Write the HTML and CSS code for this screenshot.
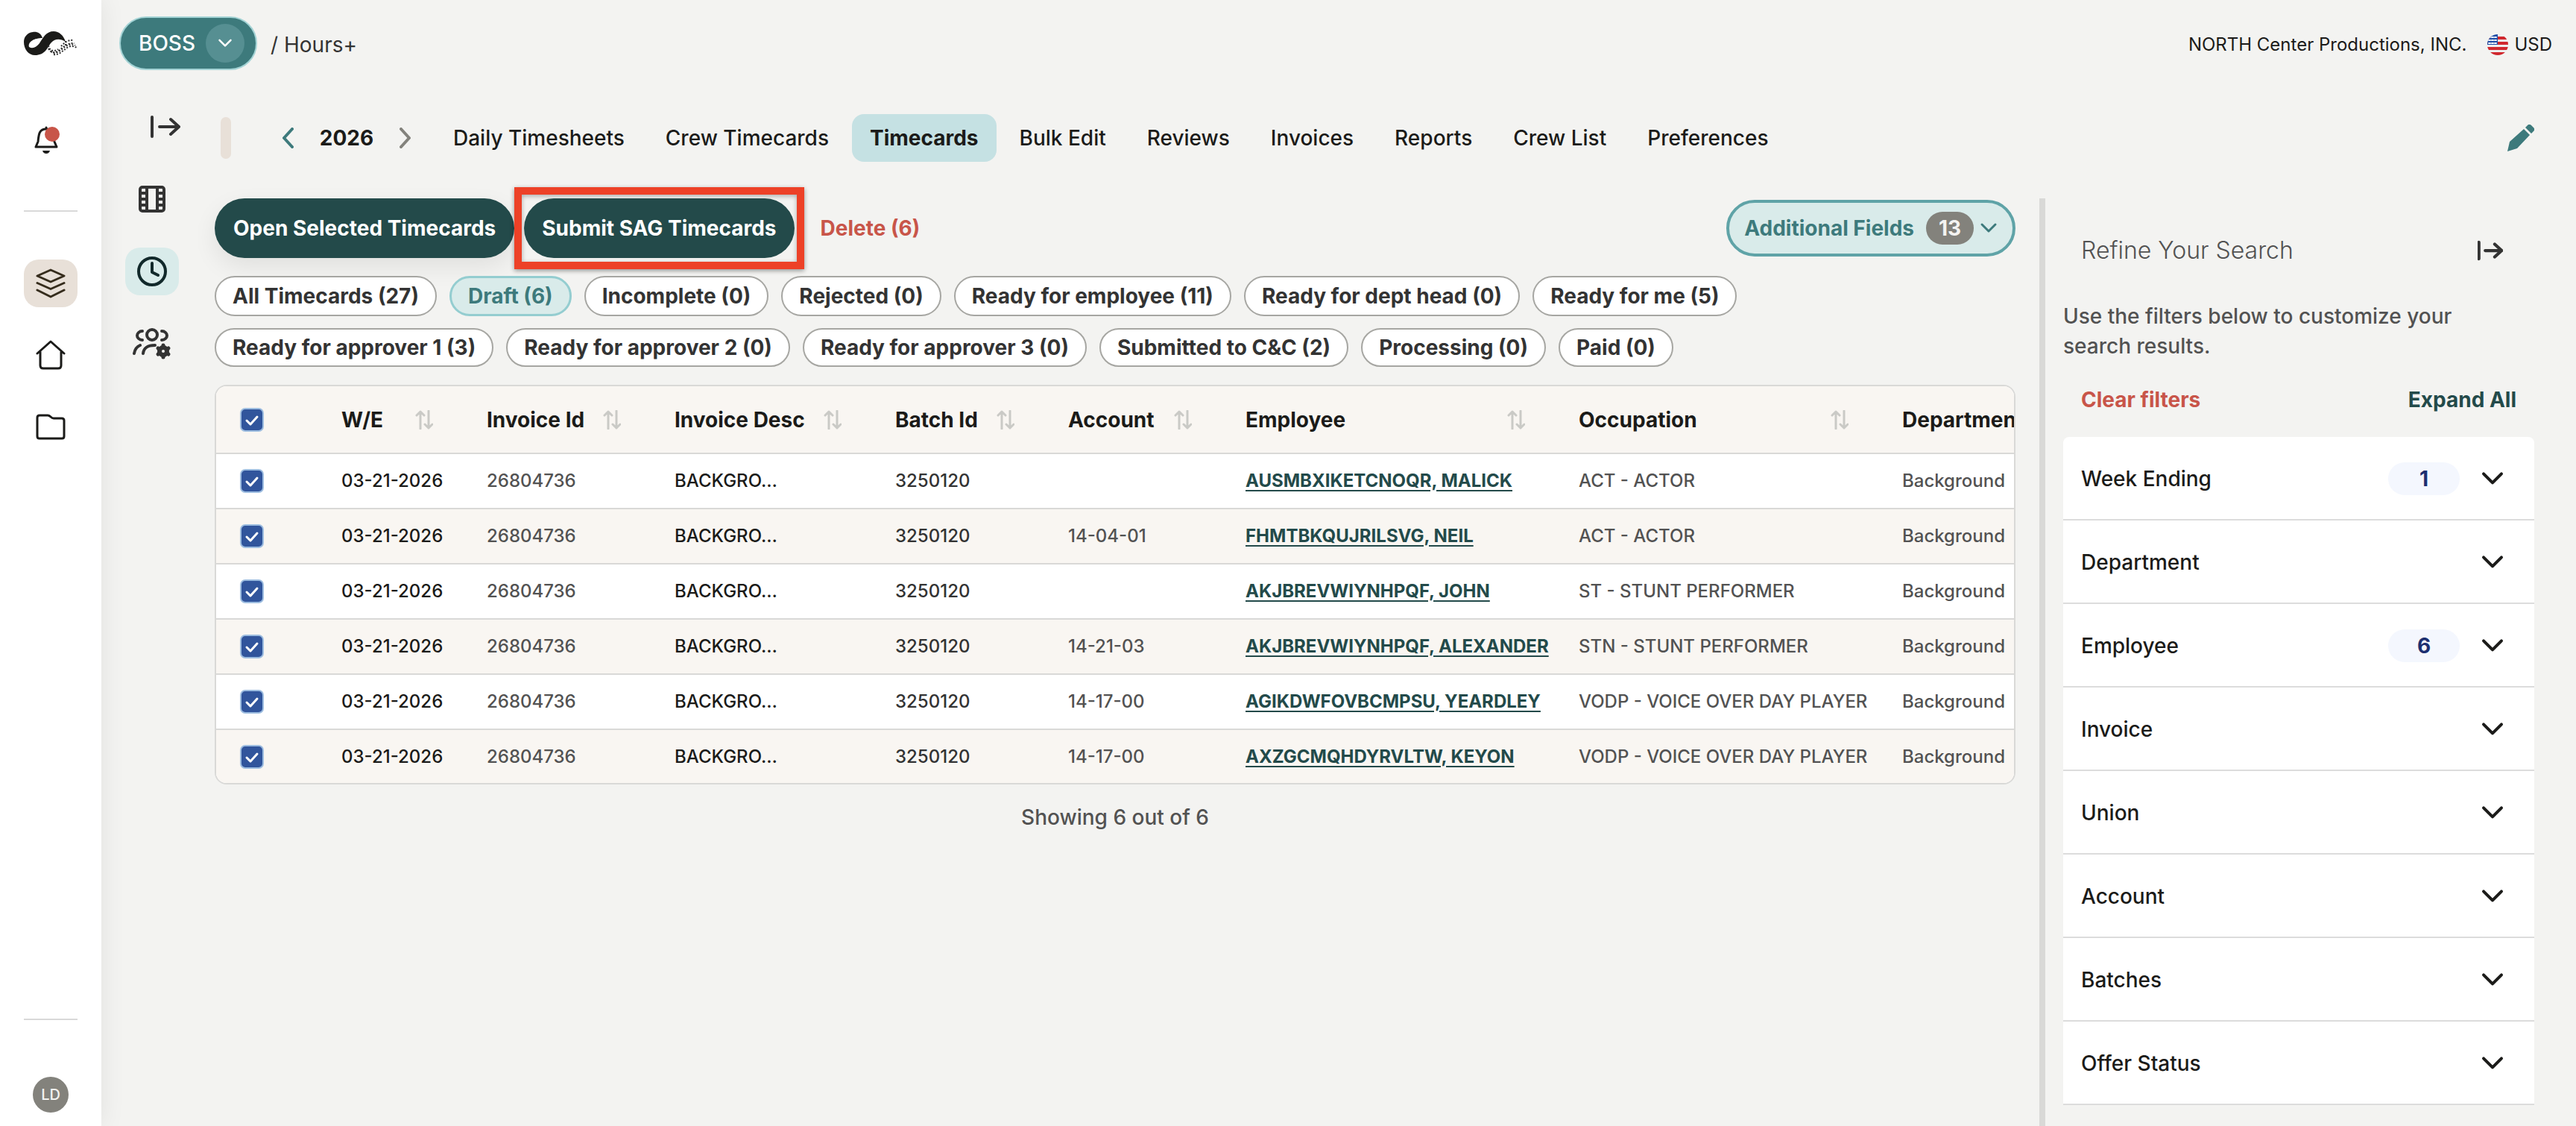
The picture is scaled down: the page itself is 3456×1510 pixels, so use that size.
FILE: index.html
```html
<!DOCTYPE html>
<html lang="en">
<head>
<meta charset="utf-8">
<title>Hours+ Timecards</title>
<link rel="stylesheet" href="styles.css">
</head>
<body>
<svg class="defs" aria-hidden="true">
  <symbol id="down" viewBox="0 0 24 24"><path d="M3 7l9 9 9-9"/></symbol>
  <symbol id="collapse" viewBox="0 0 40 32"><path d="M2 3v26M12 16h26M27 6l11 10-11 10"/></symbol>
  <symbol id="sort" viewBox="0 0 24 26"><path d="M7 25V2M2 7l5-5 5 5M18 1v23M13 19l5 5 5-5"/></symbol>
</svg>
<div class="app">
  <aside class="rail">
    <a class="logo" href="#" aria-label="Home page">
      <svg width="72" height="34" viewBox="0 0 72 34"><path class="band" d="M25 10C23 3 17 1 12 2 4 3 0 9 0 15c0 10 6 18 15 18 13 0 16-9 21-16 5-6 12-7 20-2C53 6 47 1 40 1 30 1 26 9 21 17c-4 5-9 8-14 5-2-7 7-12 18-12z"/><path class="dots" d="M33 20c1 7 7 9 13 5M33 24c3 6 9 7 15 2 6-5 12-10 20-9M36 28c5 4 10 1 15-3 6-5 11-9 18-5M40 32c6 1 10-3 14-6s9-8 17-3M50 21c4-4 8-9 17-8M56 14v6"/></svg>
    </a>
    <button class="rail-btn bell" aria-label="Notifications">
      <svg width="44" height="40" viewBox="0 0 44 40"><path d="M16 3v2M2 29h28l-3-7c-1-8-1-17-11-17S6 13 5 22z"/><path class="fill" d="M11 34h10c-1 3-3 4-5 4s-4-1-5-4z"/><circle class="alert" cx="24" cy="12" r="10"/></svg>
    </button>
    <hr class="rail-line">
    <nav class="rail-nav" aria-label="Main">
      <a class="rail-btn active" href="#" aria-label="Projects"><svg width="40" height="40" viewBox="0 0 40 40"><path d="M20 2l18 8-18 8L2 10zM2 19.500l18 8 18-8M2 29l18 9 18-9"/></svg></a>
      <a class="rail-btn" href="#" aria-label="Home"><svg width="40" height="40" viewBox="0 0 40 40"><path d="M2 18L20 2l18 16M6 16v18c0 2 1 4 4 4h20c3 0 4-2 4-4V16"/></svg></a>
      <a class="rail-btn" href="#" aria-label="Files"><svg width="40" height="40" viewBox="0 0 40 40"><path d="M2 8c0-2 1-3 3-3h11c4 0 4 4 8 4h11c2 0 3 1 3 3v21c0 2-1 3-3 3H5c-2 0-3-1-3-3z"/></svg></a>
    </nav>
    <div class="rail-foot"><hr class="rail-line"><button class="avatar">LD</button></div>
  </aside>

  <div class="main">
    <header class="topbar">
      <button class="boss">BOSS <span class="boss-chev"><svg width="20" height="20"><use href="#down"/></svg></span></button>
      <span class="crumb">/ Hours+</span>
      <span class="company">NORTH Center Productions, INC.</span>
      <span class="currency">
        <svg width="28" height="28" viewBox="0 0 28 28"><clipPath id="c"><circle cx="14" cy="14" r="14"/></clipPath><g clip-path="url(#c)"><path fill="#eee" d="M0 0h28v28H0z"/><path fill="#d0282e" d="M0 3h28v4H0zM0 10h28v4H0zM0 17h28v4H0zM0 24h28v4H0z"/><path fill="#1f4fa8" d="M0 0h14v14H0z"/><path stroke="#fff" stroke-width="2" stroke-dasharray="2 2" d="M2 4h12M2 8h12M2 12h12"/></g></svg>
        USD
      </span>
    </header>

    <div class="body">
      <nav class="tools" aria-label="Section">
        <button class="tool expand" aria-label="Expand menu"><svg width="40" height="32"><use href="#collapse"/></svg></button>
        <a class="tool" href="#" aria-label="Projects"><svg width="36" height="36" viewBox="0 0 36 36"><rect x="2" y="2" width="32" height="32" rx="3"/><path d="M11 2v32M25 2v32M2 10h9M2 18h9M2 26h9M25 10h9M25 18h9M25 26h9"/></svg></a>
        <a class="tool current" href="#" aria-label="Hours"><svg width="40" height="40" viewBox="0 0 40 40"><circle cx="20" cy="20" r="18"/><path d="M20 9v12l8 4"/></svg></a>
        <a class="tool" href="#" aria-label="Crew settings"><svg width="52" height="44" viewBox="0 0 52 44"><circle cx="26" cy="10" r="7"/><path d="M13 5c-4 0-7 3-7 6s3 6 7 6M39 5c4 0 7 3 7 6s-3 6-7 6M2 35c1-6 3-9 8-11M14 35c1-8 6-11 16-11"/><g class="gear"><circle cx="41" cy="32" r="5"/><path d="M41 24v1M41 39v1M34 28l1 1M47 35l1 1M34 36l1-1M47 29l1-1"/></g></svg></a>
      </nav>

      <div class="content">
        <div class="tabbar">
          <span class="grip"></span>
          <div class="year">
            <button class="step prev" aria-label="Previous year"><svg width="16" height="28" viewBox="0 0 16 28"><path d="M14 2L3 14l11 12"/></svg></button>
            <span>2026</span>
            <button class="step" aria-label="Next year"><svg width="16" height="28" viewBox="0 0 16 28"><path d="M2 2l11 12L2 26"/></svg></button>
          </div>
          <nav class="tabs" aria-label="Hours">
            <a href="#">Daily Timesheets</a><a href="#">Crew Timecards</a><a class="on" href="#">Timecards</a><a href="#">Bulk Edit</a><a href="#">Reviews</a><a href="#">Invoices</a><a href="#">Reports</a><a href="#">Crew List</a><a href="#">Preferences</a>
          </nav>
          <button class="edit" aria-label="Edit"><svg width="36" height="36" viewBox="0 0 36 36"><path d="M22 6l8 8-17 18-13 4 3-13zM24 4l3-3c2-2 4-1 5 0l3 3c2 2 1 4 0 5l-3 3z"/></svg></button>
        </div>

        <div class="columns">
          <main class="list">
            <div class="actions">
              <button class="primary raised">Open Selected Timecards</button>
              <div class="callout"><button class="primary">Submit SAG Timecards</button></div>
              <button class="danger">Delete (6)</button>
              <button class="fields">Additional Fields <span class="count">13</span><svg width="24" height="24"><use href="#down"/></svg></button>
            </div>
            <div class="chips">
              <button>All Timecards (27)</button><button class="on">Draft (6)</button><button>Incomplete (0)</button><button>Rejected (0)</button><button>Ready for employee (11)</button><button>Ready for dept head (0)</button><button>Ready for me (5)</button>
            </div>
            <div class="chips">
              <button>Ready for approver 1 (3)</button><button>Ready for approver 2 (0)</button><button>Ready for approver 3 (0)</button><button>Submitted to C&amp;C (2)</button><button>Processing (0)</button><button>Paid (0)</button>
            </div>
            <div class="table-wrap">
              <table>
                <colgroup><col class="w-check"><col class="w-date"><col class="w-inv"><col class="w-desc"><col class="w-batch"><col class="w-acct"><col class="w-emp"><col class="w-occ"><col class="w-dept"></colgroup>
                <thead><tr>
                  <th><input type="checkbox" checked aria-label="Select all"></th>
                  <th><div>W/E<svg><use href="#sort"/></svg></div></th>
                  <th><div>Invoice Id<svg><use href="#sort"/></svg></div></th>
                  <th><div>Invoice Desc<svg><use href="#sort"/></svg></div></th>
                  <th><div>Batch Id<svg><use href="#sort"/></svg></div></th>
                  <th><div>Account<svg><use href="#sort"/></svg></div></th>
                  <th><div>Employee<svg><use href="#sort"/></svg></div></th>
                  <th><div>Occupation<svg><use href="#sort"/></svg></div></th>
                  <th><div>Department<svg><use href="#sort"/></svg></div></th>
                </tr></thead>
                <tbody>
                  <tr><td><input type="checkbox" checked aria-label="Select row 1"></td><td class="dark">03-21-2026</td><td>26804736</td><td class="dark">BACKGRO…</td><td class="mid">3250120</td><td></td><td><a href="#">AUSMBXIKETCNOQR, MALICK</a></td><td>ACT - ACTOR</td><td>Background</td></tr>
                  <tr><td><input type="checkbox" checked aria-label="Select row 2"></td><td class="dark">03-21-2026</td><td>26804736</td><td class="dark">BACKGRO…</td><td class="mid">3250120</td><td>14-04-01</td><td><a href="#">FHMTBKQUJRILSVG, NEIL</a></td><td>ACT - ACTOR</td><td>Background</td></tr>
                  <tr><td><input type="checkbox" checked aria-label="Select row 3"></td><td class="dark">03-21-2026</td><td>26804736</td><td class="dark">BACKGRO…</td><td class="mid">3250120</td><td></td><td><a href="#">AKJBREVWIYNHPQF, JOHN</a></td><td>ST - STUNT PERFORMER</td><td>Background</td></tr>
                  <tr><td><input type="checkbox" checked aria-label="Select row 4"></td><td class="dark">03-21-2026</td><td>26804736</td><td class="dark">BACKGRO…</td><td class="mid">3250120</td><td>14-21-03</td><td><a href="#">AKJBREVWIYNHPQF, ALEXANDER</a></td><td>STN - STUNT PERFORMER</td><td>Background</td></tr>
                  <tr><td><input type="checkbox" checked aria-label="Select row 5"></td><td class="dark">03-21-2026</td><td>26804736</td><td class="dark">BACKGRO…</td><td class="mid">3250120</td><td>14-17-00</td><td><a href="#">AGIKDWFOVBCMPSU, YEARDLEY</a></td><td>VODP - VOICE OVER DAY PLAYER</td><td>Background</td></tr>
                  <tr><td><input type="checkbox" checked aria-label="Select row 6"></td><td class="dark">03-21-2026</td><td>26804736</td><td class="dark">BACKGRO…</td><td class="mid">3250120</td><td>14-17-00</td><td><a href="#">AXZGCMQHDYRVLTW, KEYON</a></td><td>VODP - VOICE OVER DAY PLAYER</td><td>Background</td></tr>
                </tbody>
              </table>
            </div>
            <p class="showing">Showing 6 out of 6</p>
          </main>

          <aside class="filters">
            <div class="filters-head"><h2>Refine Your Search</h2><button class="fold" aria-label="Collapse filters"><svg width="34" height="28"><use href="#collapse"/></svg></button></div>
            <p class="hint">Use the filters below to customize your search results.</p>
            <div class="filter-actions"><button class="clear">Clear filters</button><button class="expand-all">Expand All</button></div>
            <div class="accordion">
              <button>Week Ending<span class="pill">1</span><svg><use href="#down"/></svg></button>
              <button>Department<svg><use href="#down"/></svg></button>
              <button>Employee<span class="pill">6</span><svg><use href="#down"/></svg></button>
              <button>Invoice<svg><use href="#down"/></svg></button>
              <button>Union<svg><use href="#down"/></svg></button>
              <button>Account<svg><use href="#down"/></svg></button>
              <button>Batches<svg><use href="#down"/></svg></button>
              <button>Offer Status<svg><use href="#down"/></svg></button>
            </div>
          </aside>
        </div>
      </div>
    </div>
  </div>
</div>
</body>
</html>
```
FILE: styles.css
```css
* { box-sizing: border-box; }
body { margin: 0; background: #f3f3f1; color: #1b1b19; font: 500 28px/40px Inter, "Liberation Sans", sans-serif; }
button { margin: 0; padding: 0; border: 0; background: none; color: inherit; font: inherit; cursor: pointer; }
a { color: inherit; text-decoration: none; }
svg { display: block; fill: none; stroke: currentColor; stroke-width: 3; stroke-linecap: round; stroke-linejoin: round; flex: none; }
.defs { position: absolute; width: 0; height: 0; }

.app { display: flex; min-height: 100vh; }
.rail { width: 136px; flex: none; padding: 41px 32px 18px; background: #fff; box-shadow: 0 0 32px rgba(0, 0, 0, .08); display: flex; flex-direction: column; align-items: center; }
.logo { display: block; }
.logo .band { fill: #1b1b19; stroke: none; }
.logo .dots { stroke: #333; stroke-width: 2; stroke-dasharray: 2 2; stroke-linecap: butt; }
.rail-btn { width: 72px; height: 64px; border-radius: 20px; display: flex; align-items: center; justify-content: center; }
.rail-btn.active { background: #e8e0d8; color: #352c1c; }
.bell { margin-top: 81px; }
.bell .fill { fill: currentColor; stroke: none; }
.bell .alert { fill: #c85549; stroke: none; }
.rail-line { width: 72px; height: 2px; margin: 62px 0 0; border: 0; background: #d9d9d9; }
.rail-nav { margin-top: 64px; display: flex; flex-direction: column; gap: 32px; }
.rail-foot { margin-top: auto; display: flex; flex-direction: column; align-items: center; gap: 76px; }
.avatar { width: 48px; height: 48px; border-radius: 24px; background: #83827c; color: #f3f3f1; font-size: 20px; line-height: 48px; }

.main { flex: 1; min-width: 0; padding: 22px 32px 0 24px; display: flex; flex-direction: column; }
.topbar { display: flex; align-items: center; height: 72px; }
.boss { display: flex; align-items: center; gap: 14px; height: 72px; padding: 0 15px 0 24px; border: 2px solid #a3d3d5; border-radius: 36px; background: #3d7a7c; color: #fff; }
.boss-chev { width: 52px; height: 52px; border-radius: 26px; background: #568f92; display: flex; align-items: center; justify-content: center; }
.crumb { margin-left: 18px; padding-top: 4px; font-weight: 400; color: #333; }
.company { margin-left: auto; padding-top: 3px; font-size: 24px; font-weight: 400; }
.currency { margin-left: 28px; padding-top: 3px; display: flex; align-items: center; gap: 8px; font-size: 24px; font-weight: 400; }
.currency svg { stroke: none; }

.body { flex: 1; display: flex; }
.tools { width: 104px; flex: none; padding: 44px 0 0 8px; display: flex; flex-direction: column; gap: 33px; color: #333; }
.tools svg { stroke-width: 4; }
.tool { width: 72px; height: 64px; border-radius: 20px; display: flex; align-items: center; justify-content: center; }
.expand { margin-left: 18px; }
.current { background: #d9ebea; color: #12292b; }
.gear circle { stroke-width: 6; }
.gear path { stroke-width: 5; }
.content { flex: 1; min-width: 0; padding: 59px 0 0 24px; display: flex; flex-direction: column; }
.tabbar { display: flex; align-items: center; height: 64px; padding-left: 8px; }
.grip { width: 14px; height: 56px; border-radius: 7px; background: #e8e0d8; }
.year { margin-left: 68px; width: 174px; display: flex; align-items: center; justify-content: space-between; font-weight: 700; }
.step { color: #83827c; }
.step svg { stroke-width: 4; }
.prev { color: #3d7a7c; }
.tabs { margin-left: 32px; display: flex; gap: 7px; }
.tabs a { padding: 12px 24px; border-radius: 16px; white-space: nowrap; }
.tabs .on { background: #c5e1e3; font-weight: 700; }
.edit { margin: 0 24px 0 auto; color: #3d7a7c; }
.edit svg { fill: currentColor; stroke: none; }

.columns { flex: 1; display: flex; margin-top: 49px; }
.list { flex: 1; min-width: 0; padding-right: 32px; }
.actions { display: flex; align-items: center; height: 80px; font-weight: 700; }
.primary { height: 80px; padding: 0 24px; border-radius: 40px; background: #234a4a; color: #fff; white-space: nowrap; }
.raised { padding: 0 25px; box-shadow: 0 12px 32px rgba(0, 0, 0, .08); }
.callout { padding: 5px 3px; border: 10px solid #ed4127; box-shadow: 0 2px 6px rgba(0, 0, 0, .4), inset 0 2px 6px rgba(0, 0, 0, .3); }
.danger { margin-left: 22px; color: #c85549; }
.fields { margin-left: auto; height: 76px; padding: 0 20px; border: 4px solid #5fa3a7; border-radius: 38px; background: #d9ebea; color: #3d7a7c; display: flex; align-items: center; }
.count { margin: 0 8px 0 16px; width: 64px; height: 44px; border-radius: 22px; background: #83827c; color: #f3f3f1; line-height: 44px; }
.chips { display: flex; align-items: stretch; gap: 17px; margin-top: 16px; }
.actions + .chips { margin-top: 24px; }
.chips button { padding: 2px 22px; border: 2px solid #a6a6a2; border-radius: 27px; background: #fff; color: #333; font-weight: 700; line-height: 44px; white-space: nowrap; }
.chips .on { border: 3px solid #94cdd0; background: #d9ebea; color: #3d7a7c; }

.table-wrap { margin-top: 24px; border: 2px solid #d9d9d7; border-radius: 16px; overflow: hidden; }
table { table-layout: fixed; width: 2600px; border-collapse: collapse; background: #fff; }
.w-check { width: 144px; }
.w-date { width: 195px; }
.w-inv { width: 252px; }
.w-desc { width: 296px; }
.w-batch { width: 232px; }
.w-acct { width: 238px; }
.w-emp { width: 447px; }
.w-occ { width: 434px; }
th, td { padding: 0 24px; text-align: left; white-space: nowrap; }
th { height: 90px; border-bottom: 2px solid #d9d9d7; background: #f9f6f2; font-weight: 700; }
th:first-child, td:first-child { padding-left: 32px; }
th div { display: flex; align-items: center; justify-content: space-between; padding-right: 24px; }
th svg { width: 24px; height: 26px; color: #cacac6; }
td { height: 74px; border-bottom: 2px solid #d9d9d7; font-size: 24px; color: #525252; }
tbody tr:nth-child(even) { background: #f9f6f2; }
tbody tr:last-child td { height: 72px; border-bottom: 0; }
td.dark { color: #1b1b19; }
td.mid { color: #333; }
td a { color: #234a4a; font-weight: 700; text-decoration: underline; text-underline-offset: 4px; }
input[type="checkbox"] { appearance: none; display: block; width: 32px; height: 32px; margin: 0; border: 2px solid #9dbde0; border-radius: 7px; background: #31559c url("data:image/svg+xml,%3Csvg xmlns='http://www.w3.org/2000/svg' viewBox='0 0 28 28'%3E%3Cpath d='M7 15l5 5 9-10' fill='none' stroke='%23fff' stroke-width='3' stroke-linecap='round' stroke-linejoin='round'/%3E%3C/svg%3E"); }
.showing { margin: 24px 0 0; text-align: center; color: #525252; }

.filters { width: 688px; flex: none; padding: 34px 24px 0; border-left: 8px solid #d9d9d7; color: #525252; }
.filters-head { display: flex; align-items: center; justify-content: space-between; height: 72px; padding: 0 42px 0 24px; }
h2 { margin: 0; font-size: 32px; font-weight: 300; }
.fold { color: #333; }
.fold svg { stroke-width: 5; }
.hint { margin: 32px 0 0; max-width: 560px; }
.filter-actions { display: flex; justify-content: space-between; margin: 32px 0 30px; padding: 0 24px; font-weight: 700; }
.clear { color: #c85549; }
.expand-all { color: #234a4a; }
.accordion { border-radius: 8px 8px 0 0; background: #fff; color: #1b1b19; }
.accordion button { display: flex; align-items: center; width: 100%; height: 112px; padding: 2px 40px 0 24px; border-bottom: 2px solid #dcdcdc; }
.accordion svg { width: 32px; height: 32px; margin-left: auto; }
.pill { margin-left: auto; width: 96px; height: 44px; border-radius: 22px; background: #f4f7fe; color: #1c2f70; line-height: 44px; font-weight: 700; }
.pill + svg { margin-left: 28px; }
```
